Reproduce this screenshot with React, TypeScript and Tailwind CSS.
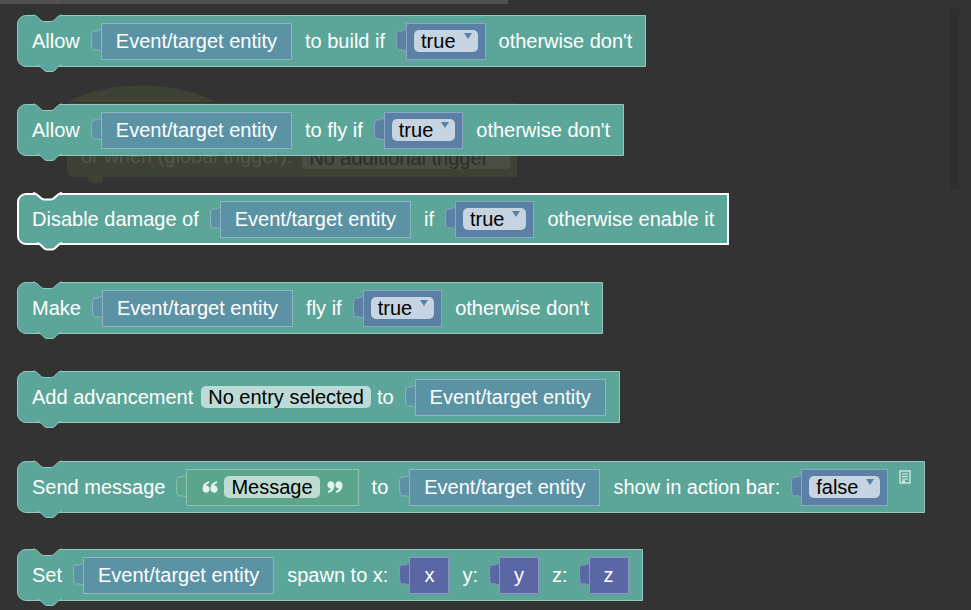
import React from 'react'

const font = "font-['Liberation_Sans',Arial,sans-serif]"

const colors = {
  entity: { fill: '#5b93a5', stroke: '#8db6c5' },
  bool: { fill: '#5b80a5', stroke: '#8ca7c4' },
  text: { fill: '#5ba58c', stroke: '#8dc4b0' },
  num: { fill: '#5b67a5', stroke: '#8e95c4' },
}

function Label({ children, className = '' }: { children: React.ReactNode; className?: string }) {
  return <span className={`whitespace-pre text-[20px] leading-none text-white ${className}`}>{children}</span>
}

// output tab drawn left of a plugged-in block
function Tab({ fill, stroke }: { fill: string; stroke: string }) {
  return (
    <svg width="11" height="37" className="-mr-px shrink-0 overflow-visible">
      <path
        d="M11.5,6 C9,6 6,9 3,8 C1,7.5 0.5,10 0.5,16.5 C0.5,23 1,27 3,27 C6,26 9,28 11.5,28 Z"
        fill={fill}
        stroke={stroke}
        strokeWidth="1"
      />
    </svg>
  )
}

function Socket({
  kind,
  children,
  className = '',
}: {
  kind: keyof typeof colors
  children: React.ReactNode
  className?: string
}) {
  const c = colors[kind]
  const rect =
    kind === 'entity'
      ? 'bg-[#5b93a5] border-[#8db6c5] px-[14px]'
      : kind === 'bool'
        ? 'bg-[#5b80a5] border-[#8ca7c4] px-[7px]'
        : kind === 'text'
          ? 'bg-[#5ba58c] border-[#8dc4b0] pl-[15px] pr-[15px]'
          : 'bg-[#5b67a5] border-[#8e95c4] px-[14px]'
  return (
    <div className={`flex h-[37px] shrink-0 items-start ${className}`}>
      <Tab fill={c.fill} stroke={c.stroke} />
      <div className={`relative flex h-full items-center border ${rect}`}>{children}</div>
    </div>
  )
}

function Dropdown({ value }: { value: string }) {
  return (
    <div className="flex h-[22px] items-center rounded-[5px] bg-white/65 pl-[7px] pr-[6px]">
      <span className="text-[20px] leading-none text-black">{value}</span>
      <svg width="8" height="6" className="ml-[8px] self-start mt-[3px]">
        <path d="M0,0 L8,0 L4,6 Z" fill="#5b80a5" />
      </svg>
    </div>
  )
}

function Field({ children }: { children: React.ReactNode }) {
  return (
    <div className="flex h-[22px] items-center rounded-[5px] bg-white/60 px-[7px]">
      <span className="whitespace-pre text-[20px] leading-none text-black">{children}</span>
    </div>
  )
}

function Block({
  children,
  selected = false,
  className = '',
}: {
  children: React.ReactNode
  selected?: boolean
  className?: string
}) {
  const fill = '#5ba699'
  const stroke = selected ? '#ffffff' : '#93c9c0'
  const sw = selected ? 2 : 1
  return (
    <div
      className={`relative flex h-[52px] w-fit items-center rounded-l-[9px] bg-[#5ba699] ${
        selected ? 'border-2 border-white pl-[13px] pr-[13px]' : 'border border-[#93c9c0] pl-[14px] pr-[13px]'
      } ${className}`}
    >
      {/* top notch */}
      <svg
        width="29"
        height="8"
        className={`absolute overflow-visible ${selected ? 'top-[-2px] left-[14px]' : 'top-[-1px] left-[15px]'}`}
      >
        <path d="M0,0 C5,0 7,6.5 11,6.5 L18,6.5 C22,6.5 24,0 29,0 Z" fill="#333333" />
        <path d="M0,0 C5,0 7,6.5 11,6.5 L18,6.5 C22,6.5 24,0 29,0" fill="none" stroke={stroke} strokeWidth={sw} />
      </svg>
      {/* bottom tab */}
      <svg
        width="25"
        height="8"
        className={`absolute overflow-visible ${selected ? 'bottom-[-8px] left-[18px]' : 'bottom-[-7px] left-[19px]'}`}
      >
        <path d="M0,0 C4,0 6,6.5 10,6.5 L15,6.5 C19,6.5 21,0 25,0 Z" fill={fill} />
        <path d="M0,0 C4,0 6,6.5 10,6.5 L15,6.5 C19,6.5 21,0 25,0" fill="none" stroke={stroke} strokeWidth={sw} />
      </svg>
      {children}
    </div>
  )
}

function Entity({ className = 'ml-[11px]' }: { className?: string }) {
  return (
    <Socket kind="entity" className={className}>
      <Label>Event/target entity</Label>
    </Socket>
  )
}

function Bool({ value }: { value: string }) {
  return (
    <Socket kind="bool" className="ml-[11px]">
      <Dropdown value={value} />
    </Socket>
  )
}

// one "6"-shaped quote mark, origin at top-left
const mark = (x: number) =>
  `M${x + 0.3},7 C${x + 0.3},3.2 ${x + 2.6},0.8 ${x + 6.2},0 L${x + 6.6},1.6 C${x + 4.6},2.4 ${x + 3.6},3.6 ${x + 3.4},4.2 A3.3,3.3 0 1 1 ${x + 0.3},7 Z`

function Quote({ close = false }: { close?: boolean }) {
  return (
    <svg width="16" height="12" viewBox="0 0 15 11" className={`shrink-0 ${close ? 'rotate-180' : ''}`}>
      <path d={mark(0.3) + ' ' + mark(7.8)} fill="#e6f3ed" />
    </svg>
  )
}

function Var({ name }: { name: string }) {
  return (
    <Socket kind="num" className="ml-[11px]">
      <Label>{name}</Label>
    </Socket>
  )
}

function NoteIcon() {
  return (
    <svg width="12" height="14" viewBox="0 0 12 14" className="ml-[11px] mt-[8px] self-start">
      <rect x="1" y="1" width="10" height="12" fill="#5ba699" stroke="#e6f2ef" strokeWidth="1.2" />
      <path d="M3,4 H9 M3,6.5 H9 M3,9 H9" stroke="#e6f2ef" strokeWidth="1.2" />
      <rect x="3" y="10.5" width="3" height="2" fill="#e6f2ef" />
    </svg>
  )
}

function GhostBlock() {
  return (
    <div className="absolute left-[67px] top-[85px] z-0 w-[450px]">
      <svg width="150" height="18" className="block">
        <path d="M0,17 C40,-5 108,-5 150,17 Z" fill="#3d4235" />
      </svg>
      <div className="relative flex h-[74px] items-end rounded-bl-[8px] bg-[#3d4235] pb-[8px] pl-[14px]">
        <span className="mb-[3px] text-[20px] leading-none text-[#525848]">or when (global trigger):</span>
        <div className="ml-[10px] flex h-[22px] w-[209px] items-center rounded-[4px] bg-[#494e42] px-[7px]">
          <span className="text-[20px] leading-none text-[#2c2f28]">No additional trigger</span>
        </div>
        <div className="absolute bottom-[-6px] left-[21px] h-[6px] w-[15px] rounded-b-[4px] bg-[#3d4235]" />
      </div>
    </div>
  )
}

export default function App() {
  return (
    <div className={`relative h-[610px] w-[971px] overflow-hidden bg-[#333333] ${font}`}>
      {/* flyout edge at the top */}
      <div className="flex h-[4px] w-[508px] bg-[#515151]">
        <div className="w-[63px] border-r border-[#454545]" />
      </div>

      <GhostBlock />

      {/* scrollbar */}
      <div className="absolute right-[12px] top-[9px] h-[181px] w-[9px] bg-[#2f2f2f]" />

      <div className="relative z-10 flex flex-col gap-[37px] pl-[17px] pt-[11px]">
        <Block>
          <Label>Allow</Label>
          <Entity />
          <Label className="ml-[13px]">to build if</Label>
          <Bool value="true" />
          <Label className="ml-[13px]">otherwise don't</Label>
        </Block>

        <Block>
          <Label>Allow</Label>
          <Entity />
          <Label className="ml-[13px]">to fly if</Label>
          <Bool value="true" />
          <Label className="ml-[13px]">otherwise don't</Label>
        </Block>

        <Block selected>
          <Label>Disable damage of</Label>
          <Entity />
          <Label className="ml-[13px]">if</Label>
          <Bool value="true" />
          <Label className="ml-[13px]">otherwise enable it</Label>
        </Block>

        <Block>
          <Label>Make</Label>
          <Entity />
          <Label className="ml-[13px]">fly if</Label>
          <Bool value="true" />
          <Label className="ml-[13px]">otherwise don't</Label>
        </Block>

        <Block>
          <Label>Add advancement</Label>
          <div className="ml-[8px]">
            <Field>No entry selected</Field>
          </div>
          <Label className="ml-[6px]">to</Label>
          <Entity />
        </Block>

        <Block className="mt-[1px]">
          <Label>Send message</Label>
          <Socket kind="text" className="ml-[11px]">
            <Quote />
            <div className="ml-[6px]">
              <Field>Message</Field>
            </div>
            <div className="ml-[7px]">
              <Quote close />
            </div>
          </Socket>
          <Label className="ml-[13px]">to</Label>
          <Entity />
          <Label className="ml-[13px]">show in action bar:</Label>
          <Bool value="false" />
          <NoteIcon />
        </Block>

        <Block className="-mt-[1px]">
          <Label>Set</Label>
          <Entity />
          <Label className="ml-[13px]">spawn to x:</Label>
          <Var name="x" />
          <Label className="ml-[13px]">y:</Label>
          <Var name="y" />
          <Label className="ml-[13px]">z:</Label>
          <Var name="z" />
        </Block>
      </div>
    </div>
  )
}
